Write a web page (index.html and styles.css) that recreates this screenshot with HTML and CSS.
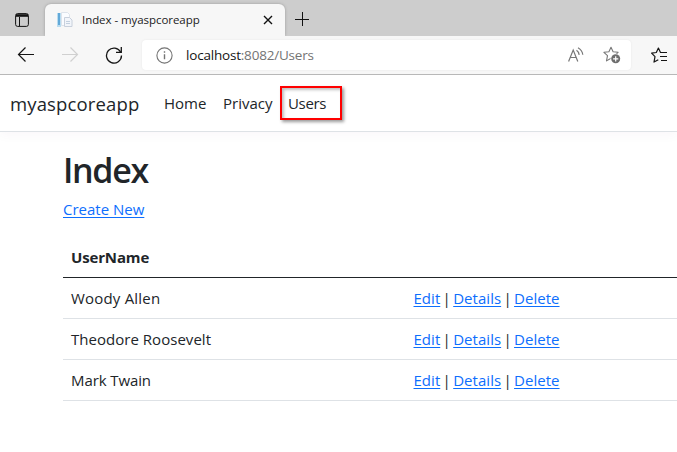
FILE: index.html
```html
<!DOCTYPE html>
<html lang="en">
<head>
<meta charset="utf-8">
<title>Index - myaspcoreapp</title>
<link rel="stylesheet" href="styles.css">
</head>
<body>
<div class="tabstrip">
  <svg class="tab-actions" width="14" height="14" viewBox="0 0 14 14" fill="none" stroke="#111"><rect x=".6" y=".6" width="12.8" height="12.8" rx="2"/><path d="M1 2.500h12" stroke-width="2.600"/><path d="M4.500 4v9"/></svg>
  <div class="tab">
    <svg class="favicon" width="16" height="16" viewBox="0 0 16 16"><path d="M0 1h4v14H0z" fill="#b9dcf0"/><path d="M1 1h2v12H1z" fill="#62a9d8"/><path d="M4.500.5h6l2 2v11h-8z" fill="#fafcff" stroke="#dde3eb"/><path d="M7.500 5.500h5l2.500 2.500v6.500H7.500z" fill="#f2f5fa" stroke="#c8d0dc"/><path d="M9 9.500h4M9 11.500h4" stroke="#c3d0df"/></svg>
    <span class="tab-title">Index - myaspcoreapp</span>
    <svg class="close" width="10" height="10" viewBox="0 0 10 10" stroke="#111" stroke-width="1.400"><path d="M1 1l8 8M9 1L1 9"/></svg>
  </div>
  <svg class="new-tab" width="15" height="15" viewBox="0 0 15 15" stroke="#111"><path d="M0 7.500h14M7.500 0v14"/></svg>
</div>
<div class="toolbar">
  <svg class="back" width="18" height="16" viewBox="0 0 18 16" fill="none" stroke="#151515" stroke-width="1.200"><path d="M17 7.500H1.500M8.500.5l-7 7 7 7"/></svg>
  <svg class="forward" width="18" height="16" viewBox="0 0 18 16" fill="none" stroke="#d0d0d0" stroke-width="1.200"><path d="M0 7.500h15.500M8.500.5l7 7-7 7"/></svg>
  <svg class="reload" width="18" height="18" viewBox="0 0 18 18" fill="none" stroke="#151515" stroke-width="1.300"><path d="M15.700 6.200A7.500 7.500 0 1 0 16.500 9.500"/><path d="M16.300 1v5.300H11"/></svg>
  <div class="address">
    <svg class="info" width="17" height="17" viewBox="0 0 17 17" fill="none" stroke="#747474" stroke-width="1.100"><circle cx="8.500" cy="8.500" r="7.600"/><path d="M8.500 7.300v5M8.500 4.300v1.400" stroke-width="1.400"/></svg>
    <span class="url"><b>localhost</b>:8082/Users</span>
    <svg class="read" width="16" height="16" viewBox="0 0 16 16" fill="none" stroke="#777" stroke-width="1.200"><path d="M.6 14.500L5.200 3l4.600 11.500M2.200 10.500h6M8.500 3.300q2.300 1.500 2.700 4.500M10 .8q4.300 2.500 4.800 7"/></svg>
    <svg class="favorite" width="18" height="18" viewBox="0 0 18 18"><path d="M8 1.200l2.100 4.500 5 .6-3.700 3.300 1 5-4.400-2.400-4.500 2.700 1-5.300L.9 6.300l5-.6z" fill="none" stroke="#777" stroke-width="1.100" stroke-linejoin="round"/><circle cx="12.700" cy="12.800" r="5.200" fill="#fff"/><circle cx="12.700" cy="12.800" r="4.500" fill="#6d6d6d"/><path d="M12.700 10.200v5.200M10.100 12.800h5.200" stroke="#fff" stroke-width="1.200"/></svg>
  </div>
  <svg class="favorites" width="18" height="17" viewBox="0 0 18 17" fill="none" stroke="#151515" stroke-width="1.200" stroke-linejoin="round"><path d="M11 5.500H9.500L7.400 1 5.300 5.500.6 6.200 4 9.600l-1 5.500 4.300-2.400"/><path d="M10 5.500h6M9 9.500h7M10 13.500h6"/></svg>
</div>
<header class="navbar">
  <a class="brand">myaspcoreapp</a>
  <nav><a class="home">Home</a><a class="privacy">Privacy</a><a class="users">Users</a></nav>
</header>
<main>
  <h1>Index</h1>
  <p><a class="link create">Create New</a></p>
  <table>
    <thead><tr><th><span class="username">UserName</span></th><th></th></tr></thead>
    <tbody>
      <tr><td><span class="woody">Woody Allen</span></td><td class="actions"><a class="link">Edit</a> | <a class="link">Details</a> | <a class="link">Delete</a></td></tr>
      <tr><td><span class="theodore">Theodore Roosevelt</span></td><td class="actions"><a class="link">Edit</a> | <a class="link">Details</a> | <a class="link">Delete</a></td></tr>
      <tr><td><span class="mark">Mark Twain</span></td><td class="actions"><a class="link">Edit</a> | <a class="link">Details</a> | <a class="link">Delete</a></td></tr>
    </tbody>
  </table>
</main>
</body>
</html>
```
FILE: styles.css
```css
* { box-sizing: border-box; }
body { margin: 0; height: 452px; overflow: hidden; background: #fff; color: #212529; font: 15px/24px "Open Sans", sans-serif; white-space: nowrap; }
svg { display: block; flex: none; }
.tabstrip { height: 36px; display: flex; background: #cdcdcd; }
.tab-actions { margin: 13px 0 0 15px; }
.tab { width: 240px; height: 32px; margin: 4px 0 0 16px; padding: 0 12px; display: flex; align-items: center; background: #f7f7f7; border-radius: 6px 6px 0 0; box-shadow: 0 0 3px #999; }
.tab-title { margin-left: 9px; color: #222; font-size: 11.500px; letter-spacing: -.06px; }
.close { margin-left: auto; }
.new-tab { margin: 12px 0 0 10px; }
.toolbar { position: relative; height: 39px; display: flex; align-items: center; background: #f7f7f7; border-bottom: 1px solid #b8b8b8; }
.back { margin-left: 17px; }
.forward { margin-left: 27px; }
.reload { margin-left: 25px; }
.address { width: 489px; height: 30px; margin-left: 19px; padding: 0 10px 0 14px; display: flex; align-items: center; background: #fff; border-radius: 4px; box-shadow: 0 0 2px #e5e5e5; }
.favorites { margin-left: 20px; }
.url { margin-left: 13px; color: #747474; font-size: 13.500px; letter-spacing: -.2px; }
.url b { color: #151515; font-weight: 400; }
.read { margin-left: auto; }
.favorite { margin-left: 19px; }
.navbar { height: 57px; padding: 0 10px; display: flex; align-items: center; border-bottom: 1px solid #dee2e6; box-shadow: 0 4px 10px rgba(80, 0, 80, .03); }
.brand { width: 153px; padding-top: 2px; font-size: 18.500px; letter-spacing: .15px; }
nav { display: flex; }
nav a { height: 34px; line-height: 34px; }
.home { width: 59px; padding-left: 1px; }
.privacy { width: 58px; padding-left: 1px; }
.users { width: 62px; padding-left: 6px; border: 2px solid #f00; line-height: 30px; letter-spacing: -.35px; box-shadow: 2px 2px 3px rgba(0, 0, 0, .4), inset 2px 2px 3px rgba(0, 0, 0, .25); }
main { padding: 17px 0 0 63px; }
h1 { margin: 0; height: 42px; font-size: 34px; line-height: 42px; font-weight: 600; letter-spacing: -1.300px; }
p { margin: 6px 0 16px; height: 24px; }
.link { color: #0d6efd; text-decoration: underline; text-decoration-thickness: 1px; text-underline-offset: 2px; }
table { width: 100%; border-collapse: separate; border-spacing: 0; table-layout: fixed; }
th, td { height: 41px; padding: 0 8px; text-align: left; border-bottom: 1px solid #dee2e6; }
th:first-child { width: 342px; }
th { border-color: #212529; font-weight: 700; letter-spacing: -.15px; }
.woody { letter-spacing: .2px; }
.theodore { letter-spacing: .03px; }
.mark { letter-spacing: -.1px; }
.actions { padding-left: 8.500px; word-spacing: -1.600px; letter-spacing: .03px; }
```
